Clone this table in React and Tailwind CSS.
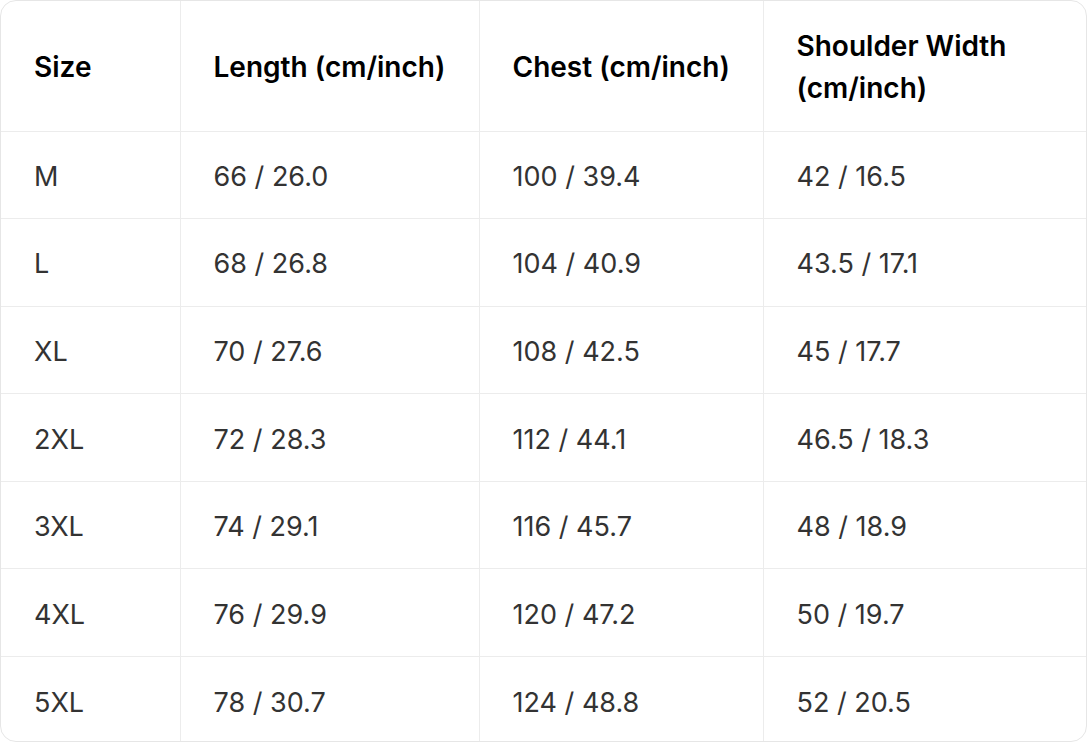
import React from "react";

const rows = [
  ["M", "66 / 26.0", "100 / 39.4", "42 / 16.5"],
  ["L", "68 / 26.8", "104 / 40.9", "43.5 / 17.1"],
  ["XL", "70 / 27.6", "108 / 42.5", "45 / 17.7"],
  ["2XL", "72 / 28.3", "112 / 44.1", "46.5 / 18.3"],
  ["3XL", "74 / 29.1", "116 / 45.7", "48 / 18.9"],
  ["4XL", "76 / 29.9", "120 / 47.2", "50 / 19.7"],
  ["5XL", "78 / 30.7", "124 / 48.8", "52 / 20.5"],
];

const headers = ["Size", "Length (cm/inch)", "Chest (cm/inch)", "Shoulder Width (cm/inch)"];

const App = () => {
  return (
    <div className="w-[1088px] h-[742px] bg-white font-['Inter',sans-serif]">
      <div className="w-[1087px] h-[742px] border border-[#e6e6e6] rounded-[16px] overflow-hidden">
        <table className="w-full border-collapse table-fixed">
          <colgroup>
            <col className="w-[179px]" />
            <col className="w-[299px]" />
            <col className="w-[284px]" />
            <col />
          </colgroup>
          <thead>
            <tr className="h-[130px]">
              {headers.map((h, i) => (
                <th
                  key={h}
                  className={`text-left align-middle pl-[33px] pr-[16px] pt-[2px] text-[28px] leading-[42px] font-semibold text-black ${
                    i > 0 ? "border-l border-[#ececec]" : ""
                  }`}
                >
                  {h}
                </th>
              ))}
            </tr>
          </thead>
          <tbody>
            {rows.map((r) => (
              <tr key={r[0]} className="h-[87.6px] border-t border-[#ececec]">
                {r.map((c, i) => (
                  <td
                    key={i}
                    className={`px-[33px] pt-[4px] pb-0 align-middle text-[27px] leading-[42px] text-[#333333] ${
                      i > 0 ? "border-l border-[#ececec]" : ""
                    }`}
                  >
                    {c}
                  </td>
                ))}
              </tr>
            ))}
          </tbody>
        </table>
      </div>
    </div>
  );
};

export default App;
